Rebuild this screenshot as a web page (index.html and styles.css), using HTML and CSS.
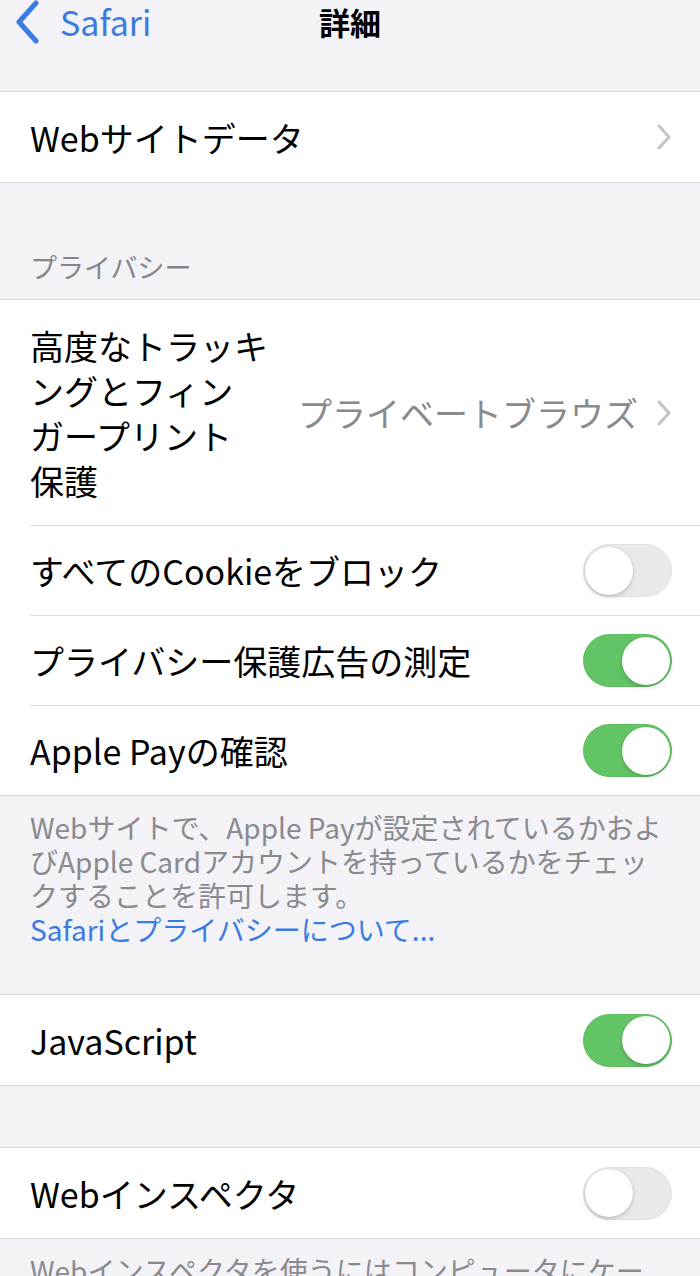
FILE: index.html
```html
<!DOCTYPE html>
<html lang="ja">
<head>
<meta charset="utf-8">
<title>詳細</title>
<link rel="stylesheet" href="styles.css">
</head>
<body>
<div class="screen">
  <header class="nav">
    <div class="nav-left">
      <svg class="back-icon" width="26" height="44" viewBox="0 0 26 44"><path d="M22 3 L5 22 L22 41" fill="none" stroke="#3a7be2" stroke-width="5" stroke-linecap="round" stroke-linejoin="round"/></svg>
      <span class="back-label">Safari</span>
    </div>
    <h1 class="nav-title">詳細</h1>
    <div class="nav-right"></div>
  </header>

  <section class="group first-group">
    <div class="row">
      <span class="label">Webサイトデータ</span>
      <svg class="chev" width="16" height="28" viewBox="0 0 16 28"><path d="M3 3 L13 14 L3 25" fill="none" stroke="#c4c4c8" stroke-width="3" stroke-linecap="round" stroke-linejoin="round"/></svg>
    </div>
  </section>

  <div class="section-header">プライバシー</div>
  <section class="group">
    <div class="row tall">
      <span class="label multiline">高度なトラッキ<br>ングとフィン<br>ガープリント<br>保護</span>
      <span class="value">プライベートブラウズ</span>
      <svg class="chev" width="16" height="28" viewBox="0 0 16 28"><path d="M3 3 L13 14 L3 25" fill="none" stroke="#c4c4c8" stroke-width="3" stroke-linecap="round" stroke-linejoin="round"/></svg>
    </div>
    <div class="row">
      <span class="label">すべてのCookieをブロック</span>
      <span class="toggle"><span class="knob"></span></span>
    </div>
    <div class="row">
      <span class="label">プライバシー保護広告の測定</span>
      <span class="toggle on"><span class="knob"></span></span>
    </div>
    <div class="row">
      <span class="label">Apple Payの確認</span>
      <span class="toggle on"><span class="knob"></span></span>
    </div>
  </section>
  <p class="footer">Webサイトで、Apple Payが設定されているかおよ<br>びApple Cardアカウントを持っているかをチェッ<br>クすることを許可します。<br><span class="link">Safariとプライバシーについて...</span></p>

  <section class="group js-group">
    <div class="row">
      <span class="label">JavaScript</span>
      <span class="toggle on"><span class="knob"></span></span>
    </div>
  </section>

  <section class="group inspector-group">
    <div class="row">
      <span class="label">Webインスペクタ</span>
      <span class="toggle"><span class="knob"></span></span>
    </div>
  </section>
  <p class="footer">Webインスペクタを使うにはコンピュータにケー<br>ブルで接続して、Macの“Safari”の“開発”メニュー<br>からアクセスしてください。</p>
</div>
</body>
</html>
```

FILE: styles.css
```css
* {
  box-sizing: border-box;
}

html, body {
  margin: 0;
  padding: 0;
  background: #f2f2f7;
}

body {
  font-family: "Noto Sans CJK JP", "Noto Sans", sans-serif;
  color: #000;
  overflow: hidden;
}

.screen {
  width: 700px;
  height: 1276px;
  overflow: hidden;
  background: #f2f2f7;
}

.nav {
  height: 40px;
  display: grid;
  grid-template-columns: 1fr auto 1fr;
  align-items: center;
  margin-bottom: 51px;
}

.nav-left {
  display: flex;
  align-items: center;
  padding-left: 14px;
}

.back-icon {
  flex-shrink: 0;
}

.back-label {
  margin-left: 20px;
  font-size: 34px;
  color: #3a7be2;
  line-height: 40px;
}

.nav-title {
  margin: 0;
  font-size: 31px;
  font-weight: 700;
  line-height: 40px;
}

.group {
  background: #fff;
  border-top: 1px solid #d9d9dd;
  border-bottom: 1px solid #d9d9dd;
}

.row {
  display: flex;
  align-items: center;
  min-height: 90px;
  padding: 0 28px 0 30px;
}

.group .row + .row {
  border-top: 1px solid #dcdcdf;
  margin-left: 30px;
  padding-left: 0;
}

.label {
  flex: 1;
  font-size: 34px;
  line-height: 45px;
  white-space: nowrap;
}

.row.tall {
  min-height: 225px;
  padding-top: 22px;
  padding-bottom: 22px;
}

.value {
  font-size: 34px;
  color: #8a8a8e;
  line-height: 45px;
  margin-right: 18px;
  white-space: nowrap;
}

.chev {
  flex-shrink: 0;
}

.section-header {
  margin: 67px 0 15px;
  padding-left: 30px;
  font-size: 27px;
  line-height: 34px;
  color: #86868b;
}

.footer {
  margin: 0;
  padding: 14px 30px 0;
  font-size: 28px;
  line-height: 34px;
  color: #8a8a8e;
  white-space: nowrap;
}

.link {
  color: #3a7be2;
}

.js-group {
  margin-top: 48px;
}

.inspector-group {
  margin-top: 61px;
}

.toggle {
  flex-shrink: 0;
  width: 89px;
  height: 53px;
  border-radius: 27px;
  background: #e9e9eb;
  border: 1.5px solid #e2e2e4;
  display: flex;
  align-items: center;
  justify-content: flex-start;
  padding: 1px;
}

.toggle.on {
  background: #63c466;
  border-color: #5cbe60;
  justify-content: flex-end;
}

.knob {
  width: 48px;
  height: 48px;
  border-radius: 50%;
  background: #fff;
  box-shadow: 0 2px 4px rgba(0, 0, 0, 0.18), 0 0 0 0.5px rgba(0, 0, 0, 0.06);
}
```
